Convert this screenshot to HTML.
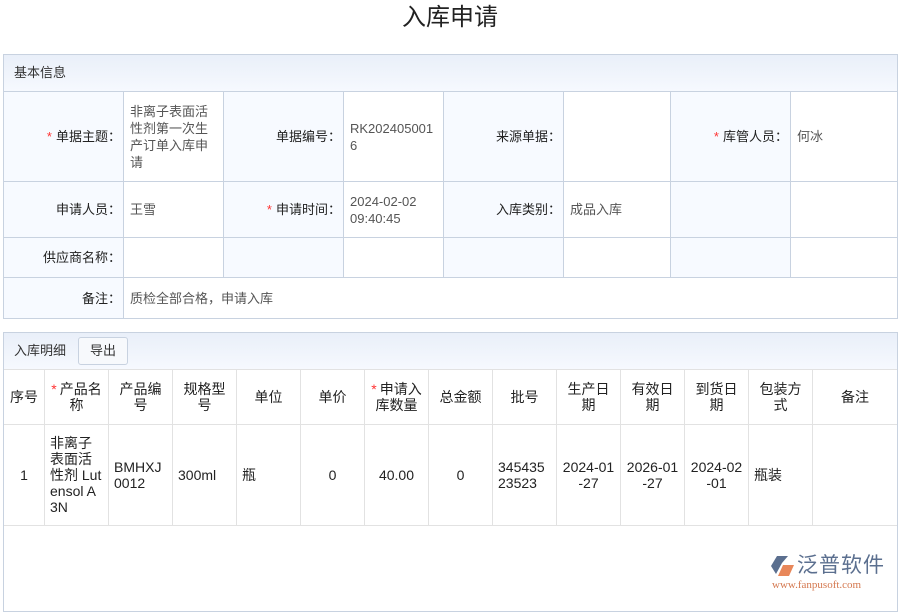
<!DOCTYPE html>
<html><head><meta charset="utf-8"><style>
*{margin:0;padding:0;box-sizing:border-box}
body{width:900px;height:600px;background:#fff;font-family:"Liberation Sans","Noto Sans CJK SC",sans-serif;font-size:13px;color:#333;position:relative;overflow:hidden}
.a{position:absolute}
.t{left:0;width:900px;top:3px;text-align:center;font-size:24px;color:#222;line-height:30px}
.sec{border:1px solid #c8d2e0}
.hd{background:linear-gradient(#e9eff9,#f6f9fe);border-bottom:1px solid #c8d2e0}
.c{position:absolute;display:flex;align-items:center;border-right:1px solid #c8d2e0;border-bottom:1px solid #c8d2e0;line-height:17px;font-size:13px}
.l{background:#f7faff;justify-content:flex-end;padding-right:2px;color:#222}
.v{background:#fff;padding-left:6px;padding-right:4px;color:#555}
.r{color:#f33;margin-right:4px}
.g{position:absolute;display:flex;align-items:center;justify-content:center;text-align:center;border-right:1px solid #e2e2e2;border-bottom:1px solid #e2e2e2;line-height:16px;color:#222;padding:0 5px;font-size:14px}
.g.tl{justify-content:flex-start;text-align:left}
</style></head><body>
<div class="a t">入库申请</div>

<div class="a sec" style="left:3px;top:54px;width:895px;height:265px;background:#fff"></div>
<div class="a hd" style="left:4px;top:55px;width:893px;height:37px;line-height:36px;padding-left:10px;color:#333">基本信息</div>

<div class="c l" style="left:4px;top:92px;width:120px;height:90px"><span class="r">*</span>单据主题：</div>
<div class="c v" style="left:124px;top:92px;width:100px;height:90px">非离子表面活性剂第一次生产订单入库申请</div>
<div class="c l" style="left:224px;top:92px;width:120px;height:90px">单据编号：</div>
<div class="c v" style="left:344px;top:92px;width:100px;height:90px;word-break:break-all">RK2024050016</div>
<div class="c l" style="left:444px;top:92px;width:120px;height:90px">来源单据：</div>
<div class="c v" style="left:564px;top:92px;width:107px;height:90px"></div>
<div class="c l" style="left:671px;top:92px;width:120px;height:90px"><span class="r">*</span>库管人员：</div>
<div class="c v" style="left:791px;top:92px;width:106px;height:90px;border-right:none">何冰</div>

<div class="c l" style="left:4px;top:182px;width:120px;height:56px">申请人员：</div>
<div class="c v" style="left:124px;top:182px;width:100px;height:56px">王雪</div>
<div class="c l" style="left:224px;top:182px;width:120px;height:56px"><span class="r">*</span>申请时间：</div>
<div class="c v" style="left:344px;top:182px;width:100px;height:56px">2024-02-02 09:40:45</div>
<div class="c l" style="left:444px;top:182px;width:120px;height:56px">入库类别：</div>
<div class="c v" style="left:564px;top:182px;width:107px;height:56px">成品入库</div>
<div class="c l" style="left:671px;top:182px;width:120px;height:56px"></div>
<div class="c v" style="left:791px;top:182px;width:106px;height:56px;border-right:none"></div>

<div class="c l" style="left:4px;top:238px;width:120px;height:40px">供应商名称：</div>
<div class="c v" style="left:124px;top:238px;width:100px;height:40px"></div>
<div class="c l" style="left:224px;top:238px;width:120px;height:40px"></div>
<div class="c v" style="left:344px;top:238px;width:100px;height:40px"></div>
<div class="c l" style="left:444px;top:238px;width:120px;height:40px"></div>
<div class="c v" style="left:564px;top:238px;width:107px;height:40px"></div>
<div class="c l" style="left:671px;top:238px;width:120px;height:40px"></div>
<div class="c v" style="left:791px;top:238px;width:106px;height:40px;border-right:none"></div>

<div class="c l" style="left:4px;top:278px;width:120px;height:40px;border-bottom:none">备注：</div>
<div class="c v" style="left:124px;top:278px;width:773px;height:40px;border:none">质检全部合格，申请入库</div>

<div class="a sec" style="left:3px;top:332px;width:895px;height:280px;background:#fff"></div>
<div class="a hd" style="left:4px;top:333px;width:893px;height:37px;border-bottom:1px solid #e2e2e2"></div>
<div class="a" style="left:14px;top:342px;line-height:18px;color:#333">入库明细</div>
<div class="a" style="left:78px;top:337px;width:50px;height:28px;border:1px solid #c8d2e0;border-radius:3px;background:#f7f9fc;text-align:center;line-height:26px;color:#333">导出</div>

<div class="g" style="left:4px;top:370px;width:41px;height:55px">序号</div>
<div class="g" style="left:45px;top:370px;width:64px;height:55px"><span><span class="r" style="margin-right:3px">*</span>产品名称</span></div>
<div class="g" style="left:109px;top:370px;width:64px;height:55px">产品编号</div>
<div class="g" style="left:173px;top:370px;width:64px;height:55px">规格型号</div>
<div class="g" style="left:237px;top:370px;width:64px;height:55px">单位</div>
<div class="g" style="left:301px;top:370px;width:64px;height:55px">单价</div>
<div class="g" style="left:365px;top:370px;width:64px;height:55px"><span><span class="r" style="margin-right:3px">*</span>申请入库数量</span></div>
<div class="g" style="left:429px;top:370px;width:64px;height:55px">总金额</div>
<div class="g" style="left:493px;top:370px;width:64px;height:55px">批号</div>
<div class="g" style="left:557px;top:370px;width:64px;height:55px">生产日期</div>
<div class="g" style="left:621px;top:370px;width:64px;height:55px">有效日期</div>
<div class="g" style="left:685px;top:370px;width:64px;height:55px">到货日期</div>
<div class="g" style="left:749px;top:370px;width:64px;height:55px">包装方式</div>
<div class="g" style="left:813px;top:370px;width:84px;height:55px;border-right:none">备注</div>

<div class="g" style="left:4px;top:425px;width:41px;height:101px">1</div>
<div class="g tl" style="left:45px;top:425px;width:64px;height:101px;word-break:break-all">非离子表面活性剂 Lutensol A3N</div>
<div class="g tl" style="left:109px;top:425px;width:64px;height:101px;word-break:break-all">BMHXJ0012</div>
<div class="g tl" style="left:173px;top:425px;width:64px;height:101px">300ml</div>
<div class="g tl" style="left:237px;top:425px;width:64px;height:101px">瓶</div>
<div class="g" style="left:301px;top:425px;width:64px;height:101px">0</div>
<div class="g" style="left:365px;top:425px;width:64px;height:101px">40.00</div>
<div class="g" style="left:429px;top:425px;width:64px;height:101px">0</div>
<div class="g tl" style="left:493px;top:425px;width:64px;height:101px;word-break:break-all">34543523523</div>
<div class="g" style="left:557px;top:425px;width:64px;height:101px;word-break:break-all">2024-01-27</div>
<div class="g" style="left:621px;top:425px;width:64px;height:101px;word-break:break-all">2026-01-27</div>
<div class="g" style="left:685px;top:425px;width:64px;height:101px;word-break:break-all">2024-02-01</div>
<div class="g tl" style="left:749px;top:425px;width:64px;height:101px">瓶装</div>
<div class="g" style="left:813px;top:425px;width:84px;height:101px;border-right:none"></div>

<svg class="a" style="left:770px;top:554px" width="26" height="24" viewBox="0 0 26 24">
<path d="M7 2 L18 2 L12 9 L6 20 L1 12 Z" fill="#5b6f8f"/>
<path d="M13 11 L24 11 L19 22 L8 22 Z" fill="#e8875a"/>
</svg>
<div class="a" style="left:797px;top:553px;font-size:21px;line-height:26px;color:#5b6f8f;letter-spacing:1px">泛普软件</div>
<div class="a" style="left:772px;top:578px;font-size:11px;line-height:14px;color:#d4784f;font-family:'Liberation Serif',serif">www.fanpusoft.com</div>
</body></html>
